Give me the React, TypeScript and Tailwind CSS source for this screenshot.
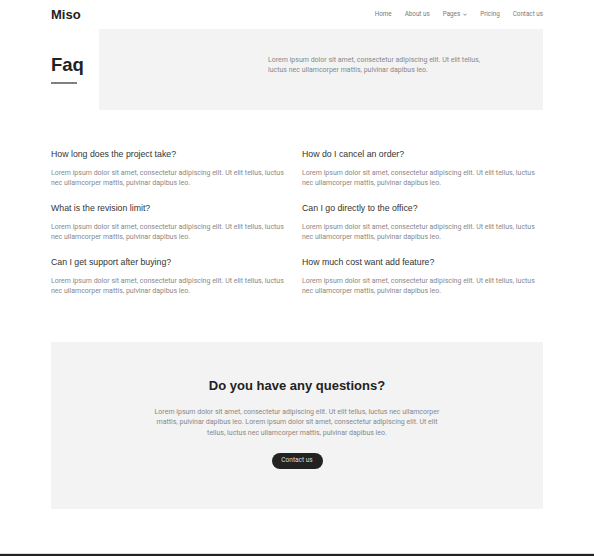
import React from 'react';

const NAV_LINKS = ['Home', 'About us', 'Pages', 'Pricing', 'Contact us'];

const LOREM =
  'Lorem ipsum dolor sit amet, consectetur adipiscing elit. Ut elit tellus, luctus nec ullamcorper mattis, pulvinar dapibus leo.';

const FAQS = [
  'How long does the project take?',
  'How do I cancel an order?',
  'What is the revision limit?',
  'Can I go directly to the office?',
  'Can I get support after buying?',
  'How much cost want add feature?',
];

const sans = "font-['Liberation_Sans',Arial,sans-serif]";
const roboto = "font-['Roboto','Liberation_Sans',sans-serif]";

export default function App() {
  return (
    <div className="min-h-screen bg-white text-[#222]">
      {/* Header */}
      <header className="mx-auto flex h-[29px] max-w-[492px] items-center justify-between">
        <span className={`${sans} text-[13px] font-bold leading-none text-[#222]`}>Miso</span>
        <nav className={`${roboto} flex items-center gap-[13px] text-[6.3px] text-[#7a7a7a]`}>
          {NAV_LINKS.map((link) => (
            <span key={link} className="flex items-center gap-[3px]">
              {link}
              {link === 'Pages' && (
                <svg width="4" height="3" viewBox="0 0 10 6">
                  <path d="M1 1l4 4 4-4" fill="none" stroke="#7a7a7a" strokeWidth="2.2" />
                </svg>
              )}
            </span>
          ))}
        </nav>
      </header>

      {/* Hero */}
      <section className="mx-auto flex h-[81px] max-w-[492px]">
        <div className="w-[48px] shrink-0 pt-[25px]">
          <h1 className={`${sans} text-[18.5px] font-bold leading-[22px] text-[#222]`}>Faq</h1>
          <div className="mt-[6px] h-[2px] w-[26px] bg-[#808080]" />
        </div>
        <div className="flex-1 bg-[#f3f3f3] pl-[169px] pt-[26px]">
          <p className={`${roboto} w-[218px] text-[7px] leading-[10.4px] text-[#888]`}>{LOREM}</p>
        </div>
      </section>

      {/* FAQ grid */}
      <section className="mx-auto mt-[38px] grid max-w-[492px] grid-cols-2 gap-x-[10px] gap-y-[14px]">
        {FAQS.map((q) => (
          <div key={q}>
            <h3 className={`${sans} text-[8.75px] leading-[12px] text-[#333]`}>{q}</h3>
            <p className={`${roboto} mt-[8px] w-[238px] text-[7px] leading-[10px] text-[#888]`}>{LOREM}</p>
          </div>
        ))}
      </section>

      {/* Call to action */}
      <section className="mx-auto mt-[46px] flex max-w-[492px] flex-col items-center bg-[#f3f3f3] pb-[40px] pt-[36px]">
        <h2 className={`${sans} text-[13px] font-bold leading-[16px] text-[#222]`}>Do you have any questions?</h2>
        <p className={`${roboto} mt-[12.5px] w-[292px] text-center text-[7px] leading-[10.5px] text-[#888]`}>
          {LOREM} {LOREM}
        </p>
        <button
          className={`${roboto} mt-[15px] h-[16px] w-[51px] rounded-full bg-[#222] text-[6.5px] text-[#ddd]`}
        >
          Contact us
        </button>
      </section>

      {/* Footer */}
      <footer className="mt-[43.5px] h-[40px] border-t border-[#ddd] bg-[#222]" />
    </div>
  );
}
